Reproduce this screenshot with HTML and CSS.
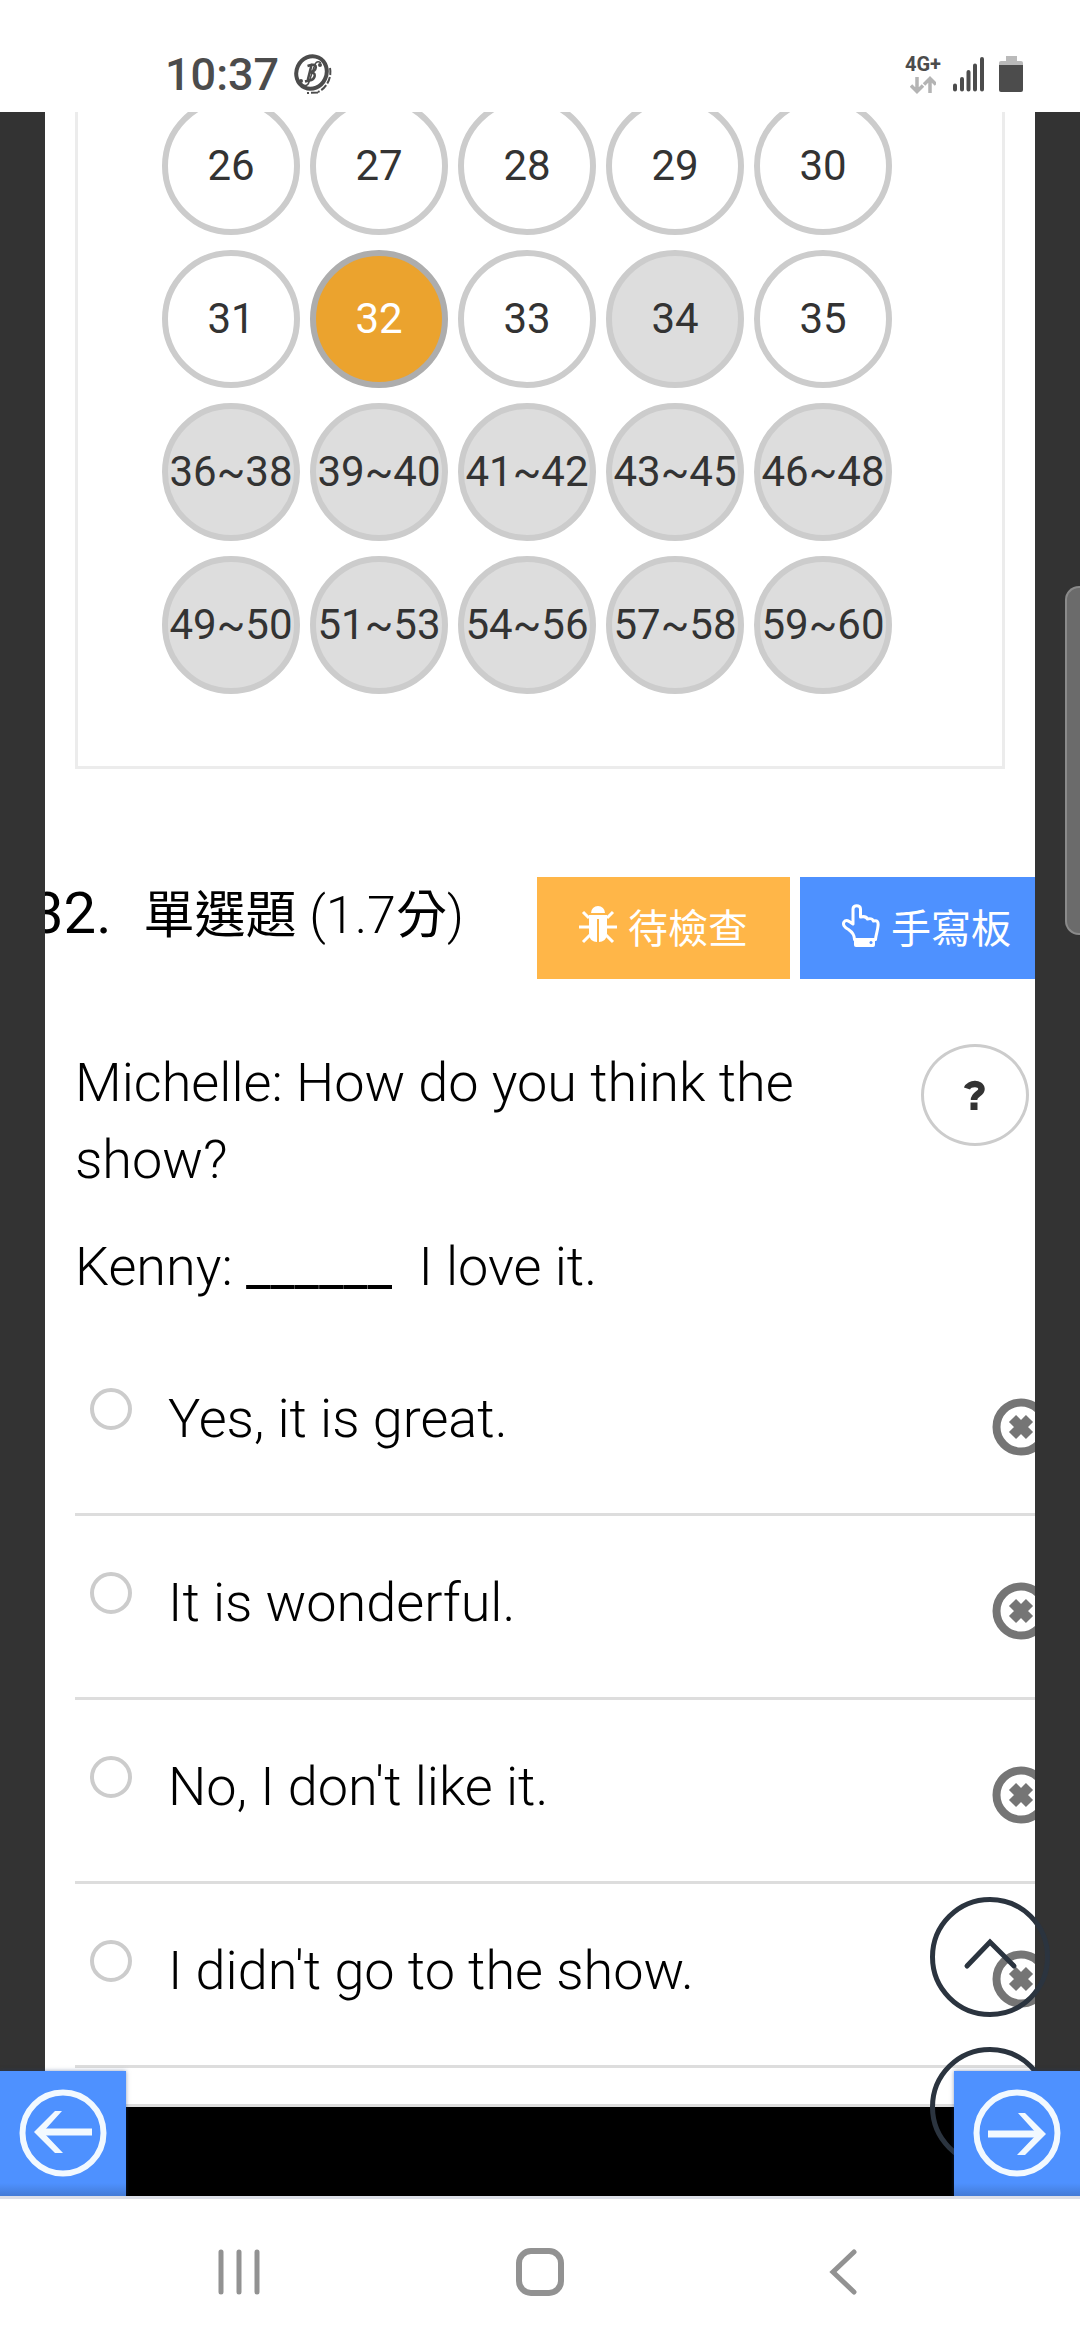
FILE: index.html
```html
<!DOCTYPE html>
<html lang="zh-Hant">
<head>
<meta charset="utf-8">
<meta name="viewport" content="width=device-width, initial-scale=1">
<title>單選題</title>
<link rel="stylesheet" href="styles.css">
</head>
<body>
<svg class="defs" aria-hidden="true">
  <symbol id="icon-cross" viewBox="0 0 58 58">
    <circle cx="29" cy="29" r="24.500" fill="none" stroke="#757575" stroke-width="8"/>
    <path d="M20.500 20.500 37.500 37.500M37.500 20.500 20.500 37.500" fill="none" stroke="#757575" stroke-width="10"/>
  </symbol>
</svg>

<header class="status">
  <span class="status-time">10:37</span>
  <svg class="status-coin" viewBox="0 0 40 40" fill="none" stroke="#4c4c4c" aria-hidden="true">
    <ellipse cx="18.500" cy="18.500" rx="15" ry="16.500" stroke-width="4" transform="rotate(25 18.500 18.500)"/>
    <path d="M37 14c2 9-3 20-12 24M25 38.500l-11 .5" stroke-width="2" stroke-dasharray="7 2"/>
    <path d="M14.500 12l5-1.500M18.500 11l-4 16M18.500 11c6-2 6 6-1.500 7.500 7-1 6 7-1 8l-4 1" stroke-width="2.500"/>
    <path d="M28 9c-4-3-6 0-7 4l-5 15c-1 4-5 5-8 1" stroke-width="1.500"/>
    <circle cx="27" cy="11" r="1" stroke-width="2"/><circle cx="8" cy="27" r="1" stroke-width="2"/>
  </svg>
  <span class="status-net">
    <span class="status-4g">4G+</span>
    <svg class="status-arrows" viewBox="0 0 26 18" fill="none" stroke="#b4b4b4" stroke-width="3.500" aria-hidden="true">
      <path d="M7 1v14M1 9.500l6 6 6-6M20 17V3M14 8.500l6-6 6 6"/>
    </svg>
  </span>
  <svg class="status-signal" viewBox="0 0 32 36" stroke="#4c4c4c" stroke-width="4" stroke-linecap="round" aria-hidden="true">
    <path d="M2 29.500v4M9 23v10.500M15.500 16v17.500M22 9.500v24M29 3v30.500"/>
  </svg>
  <svg class="status-battery" viewBox="0 0 24 37" aria-hidden="true">
    <path d="M7 0h11v5h4a2 2 0 0 1 2 2v3H0V7a2 2 0 0 1 2-2h5z" fill="#bababa"/>
    <path d="M0 9h24v25a2 2 0 0 1-2 2H2a2 2 0 0 1-2-2z" fill="#4c4c4c"/>
  </svg>
</header>

<main class="exam">
  <div class="backdrop">
    <div class="sheet">
      <nav class="picker" aria-label="題號">
        <button class="num">26</button><button class="num">27</button><button class="num">28</button><button class="num">29</button><button class="num">30</button>
        <button class="num">31</button><button class="num num-current">32</button><button class="num">33</button><button class="num num-done">34</button><button class="num">35</button>
        <button class="num num-done">36~38</button><button class="num num-done">39~40</button><button class="num num-done">41~42</button><button class="num num-done">43~45</button><button class="num num-done">46~48</button>
        <button class="num num-done">49~50</button><button class="num num-done">51~53</button><button class="num num-done">54~56</button><button class="num num-done">57~58</button><button class="num num-done">59~60</button>
      </nav>

      <div class="question-head">
        <h2 class="question-title"><span class="question-no">32.</span><span><span class="cjk">單選題</span> (1.7<span class="cjk">分</span>)</span></h2>
        <div class="tools">
          <button class="tool tool-check">
            <svg class="tool-icon" viewBox="0 0 38 44" aria-hidden="true">
              <path d="M12 9a7 7 0 0 1 14 0z" fill="#fff"/>
              <path d="M10 11h18v19c0 5-4 8-8 8V15h-2v23c-4 0-8-3-8-8z" fill="#fff"/>
              <path d="M10 14 4 8M28 14l6-6M10 23H0M28 23h10M11 31l-7 7M27 31l7 7" stroke="#fff" stroke-width="3" fill="none"/>
            </svg>待檢查</button>
          <button class="tool tool-write">
            <svg class="tool-icon" viewBox="0 0 38 44" aria-hidden="true">
              <path d="M12.500 35.500c0-5-3-8-6-10-4-2-6-5-4.500-7.500 2-3 5-1 9 2V5c0-4.500 7.500-4.500 7.500 0v8c4-1 6 0 7 2 4-1 5 0 6 2 4-1 5 1 4.500 5-.5 6-2 8-2.500 13.500z" fill="none" stroke="#fff" stroke-width="3" stroke-linejoin="round"/>
              <path d="M12 34h21v7a2 2 0 0 1-2 2H14a2 2 0 0 1-2-2z" fill="#fff"/>
              <circle cx="29" cy="38.500" r="1.500" fill="#4e91ff"/>
            </svg>手寫板</button>
        </div>
      </div>

      <div class="question">
        <div class="question-text">
          <p>Michelle: How do you think the show?</p>
          <p>Kenny: <span class="blank">______</span> &nbsp;I love it.</p>
        </div>
        <button class="help" aria-label="說明">
          <svg class="help-icon" viewBox="0 0 22 30" aria-hidden="true">
            <path d="M3 8.500C5 3 17 2 17.500 9c0 5-7.500 5-7.500 11" fill="none" stroke="#333" stroke-width="6.500"/>
            <path d="M6.500 22.500h7V30h-7z" fill="#333"/>
          </svg>
        </button>
      </div>

      <ul class="options">
        <li class="option">
          <input class="option-radio" type="radio" name="answer" id="answer-a">
          <label class="option-label" for="answer-a">Yes, it is great.</label>
          <button class="strike" aria-label="刪去"><svg class="strike-icon"><use href="#icon-cross"/></svg></button>
        </li>
        <li class="option">
          <input class="option-radio" type="radio" name="answer" id="answer-b">
          <label class="option-label" for="answer-b">It is wonderful.</label>
          <button class="strike" aria-label="刪去"><svg class="strike-icon"><use href="#icon-cross"/></svg></button>
        </li>
        <li class="option">
          <input class="option-radio" type="radio" name="answer" id="answer-c">
          <label class="option-label" for="answer-c">No, I don't like it.</label>
          <button class="strike" aria-label="刪去"><svg class="strike-icon"><use href="#icon-cross"/></svg></button>
        </li>
        <li class="option">
          <input class="option-radio" type="radio" name="answer" id="answer-d">
          <label class="option-label" for="answer-d">I didn't go to the show.</label>
          <button class="strike" aria-label="刪去"><svg class="strike-icon"><use href="#icon-cross"/></svg></button>
        </li>
      </ul>
    </div>
  </div>

  <div class="floats">
    <button class="float" aria-label="上移">
      <svg class="float-icon" viewBox="0 0 120 120" fill="none" stroke="#2b343f" stroke-width="5" aria-hidden="true">
        <circle cx="60" cy="60" r="57.500"/>
        <path d="M37 69 60 45l24 24" stroke-linecap="round"/>
      </svg>
    </button>
    <button class="float" aria-label="下移">
      <svg class="float-icon" viewBox="0 0 120 120" fill="none" stroke="#2b343f" stroke-width="5" aria-hidden="true">
        <circle cx="60" cy="60" r="57.500"/>
        <path d="M37 51 60 75l24-24" stroke-linecap="round"/>
      </svg>
    </button>
  </div>

  <button class="step step-prev" aria-label="上一題">
    <svg class="step-icon" viewBox="0 0 88 88" fill="none" stroke="#f2f9ff" aria-hidden="true">
      <circle cx="44" cy="44" r="40.500" stroke-width="6"/>
      <path d="M73 43H20" stroke-width="7"/>
      <path d="M43 22H36L15 43l21 21h8L24 43z" fill="#f2f9ff" stroke="none"/>
    </svg>
  </button>
  <button class="step step-next" aria-label="下一題">
    <svg class="step-icon" viewBox="0 0 88 88" fill="none" stroke="#f2f9ff" aria-hidden="true">
      <circle cx="44" cy="44" r="40.500" stroke-width="6"/>
      <path d="M15 45h53" stroke-width="7"/>
      <path d="M45 24h7l21 21-21 21h-8l20-21z" fill="#f2f9ff" stroke="none"/>
    </svg>
  </button>
  <span class="edge-handle"></span>
</main>

<footer class="system-nav">
  <button class="system-button" aria-label="最近">
    <svg class="system-icon" viewBox="0 0 50 50" fill="none" stroke="#929292" stroke-width="5" stroke-linecap="round"><path d="M7 5v40M25 5v40M43 5v40"/></svg>
  </button>
  <button class="system-button" aria-label="首頁">
    <svg class="system-icon" viewBox="0 0 50 50" fill="none" stroke="#929292" stroke-width="6"><rect x="4" y="4" width="42" height="42" rx="12"/></svg>
  </button>
  <button class="system-button" aria-label="返回">
    <svg class="system-icon" viewBox="0 0 50 50" fill="none" stroke="#929292" stroke-width="5" stroke-linecap="round"><path d="M38 5 17 25l21 20"/></svg>
  </button>
</footer>
</body>
</html>
```
FILE: styles.css
```css
* {
  box-sizing: border-box;
}

body {
  margin: 0;
  min-height: 100vh;
  display: flex;
  flex-direction: column;
  background: #fff;
  color: #000;
  font-family: Roboto, "Noto Sans CJK TC", sans-serif;
  overflow-x: hidden;
}

button {
  padding: 0;
  border: 0;
  background: none;
  color: inherit;
  font: inherit;
}

svg {
  display: block;
  flex: none;
}

.defs {
  position: absolute;
  width: 0;
  height: 0;
}

/* Status bar */
.status {
  display: flex;
  align-items: center;
  height: 112px;
  padding: 36px 57px 0 165px;
  color: #4c4c4c;
}

.status-time {
  font-size: 45px;
  font-weight: 500;
}

.status-coin {
  width: 40px;
  height: 40px;
  margin-left: 14px;
}

.status-net {
  display: flex;
  flex-direction: column;
  align-items: center;
  gap: 2px;
  margin-left: auto;
}

.status-4g {
  font-size: 20px;
  line-height: 20px;
  font-weight: 700;
}

.status-arrows {
  width: 26px;
  height: 18px;
}

.status-signal {
  width: 32px;
  height: 36px;
  margin-left: 12px;
}

.status-battery {
  width: 24px;
  height: 37px;
  margin-left: 14px;
}

/* Scrolled exam page */
.exam {
  position: relative;
  flex: 1;
  padding-bottom: 89px;
  background: #000;
  overflow: hidden;
}

.backdrop {
  padding: 0 45px;
  background: #333;
}

.sheet {
  padding: 0 30px 36px;
  border-bottom: 3px solid #ddd;
  background: #fff;
  overflow: hidden;
}

.picker {
  display: flex;
  flex-wrap: wrap;
  gap: 15px 10px;
  margin-top: -15px;
  padding: 0 84px 72px;
  border: solid #ececec;
  border-width: 0 3px 3px;
}

.num {
  width: 138px;
  height: 138px;
  padding-bottom: 2px;
  border: 6px solid #ccc;
  border-radius: 50%;
  background: #fff;
  color: #333;
  font-size: 42px;
}

.num-done {
  background: #ddd;
}

.num-current {
  border-color: #adadad;
  background: #eba32e;
  color: #fff;
}

.question-head {
  display: flex;
  align-items: flex-start;
  justify-content: space-between;
  margin: 108px -48px 0 -44px;
}

.question-title {
  display: flex;
  align-items: baseline;
  gap: 32px;
  margin: 0;
  font-size: 52px;
  line-height: 73px;
  font-weight: 300;
  white-space: nowrap;
}

.question-no {
  font-size: 58px;
  font-weight: 400;
}

.cjk {
  font-size: 51px;
  font-weight: 400;
}

.tools {
  display: flex;
  gap: 10px;
}

.tool {
  display: flex;
  align-items: center;
  gap: 11px;
  height: 102px;
  padding: 0 42px 4px;
  color: #fff;
  font-size: 40px;
  font-weight: 400;
  white-space: nowrap;
}

.tool-check {
  background: #ffb648;
}

.tool-write {
  background: #4e91ff;
}

.tool-icon {
  width: 38px;
  height: 44px;
}

.question {
  display: flex;
  align-items: flex-start;
  gap: 40px;
  margin: 65px -24px 27px 0;
}

.question-text {
  flex: 1;
  font-size: 54px;
  line-height: 77px;
  font-weight: 300;
}

.question-text p {
  margin: 0;
}

.question-text p + p {
  margin-top: 30px;
}

.blank {
  font-weight: 400;
}

.help {
  display: flex;
  align-items: center;
  justify-content: center;
  width: 108px;
  height: 102px;
  border: 3px solid #ccc;
  border-radius: 50%;
}

.help-icon {
  width: 22px;
  height: 30px;
}

.options {
  margin: 0 -45px 0 0;
  padding: 0;
  list-style: none;
}

.option {
  display: flex;
  align-items: flex-start;
  padding: 48px 0 56px 15px;
  border-bottom: 3px solid #ddd;
}

.option-radio {
  appearance: none;
  width: 42px;
  height: 42px;
  margin: 8px 36px 0 0;
  border: 4px solid #ccc;
  border-radius: 50%;
  background: #fff;
}

.option-label {
  flex: 1;
  font-size: 54px;
  line-height: 77px;
  font-weight: 300;
}

.strike {
  margin-top: 18px;
}

.strike-icon {
  width: 58px;
  height: 58px;
}

/* Controls over the page */
.floats {
  position: absolute;
  right: 30px;
  bottom: 29px;
  display: grid;
  gap: 30px;
}

.float-icon {
  width: 120px;
  height: 120px;
}

.step {
  position: absolute;
  bottom: 0;
  display: flex;
  align-items: center;
  justify-content: center;
  width: 126px;
  height: 125px;
  padding-bottom: 2px;
  background: linear-gradient(#4e91ff 112px, #447bd6);
  box-shadow: 0 0 4px rgba(30, 60, 120, 0.5);
}

.step-prev {
  left: 0;
}

.step-next {
  right: 0;
}

.step-icon {
  width: 88px;
  height: 88px;
}

.edge-handle {
  position: absolute;
  top: 474px;
  right: 0;
  width: 15px;
  height: 349px;
  border: solid #8a8a8a;
  border-width: 2px 0 2px 2px;
  border-radius: 14px 0 0 14px;
  background: #6b6b6b;
}

/* System navigation */
.system-nav {
  display: grid;
  grid-template-columns: repeat(3, 1fr);
  padding: 48px 88px 43px;
  border-top: 3px solid #dcdfe8;
}

.system-button {
  display: flex;
  justify-content: center;
  height: 50px;
}

.system-icon {
  width: 50px;
  height: 50px;
}
```
